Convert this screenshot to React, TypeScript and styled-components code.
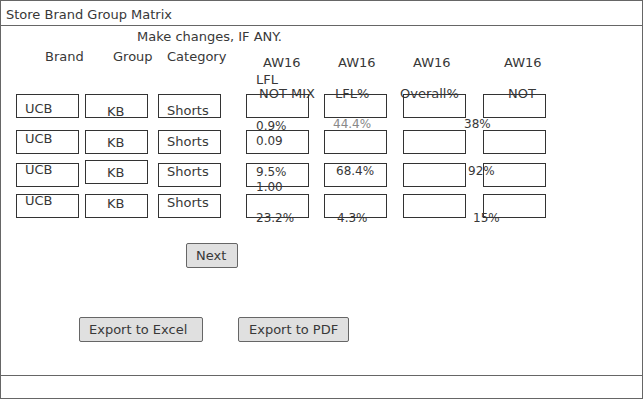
import React from "react";
import styled, { createGlobalStyle, css } from "styled-components";

const Global = createGlobalStyle`
  html, body { margin: 0; padding: 0; background: #ffffff; }
  body { font-family: "DejaVu Sans", "Liberation Sans", sans-serif; color: #333333; }
`;

const Window = styled.div`
  width: 643px;
  height: 399px;
  box-sizing: border-box;
  border: 1px solid #666666;
  display: flex;
  flex-direction: column;
  background: #ffffff;
`;

const TitleBar = styled.div`
  height: 25px;
  box-sizing: border-box;
  border-bottom: 1px solid #666666;
  padding: 5.5px 0 0 5px;
  font-size: 13px;
  line-height: 15px;
  color: #383838;
`;

const Body = styled.div`
  flex: 1;
  display: flex;
  flex-direction: column;
  padding-top: 3px;
`;

const StatusBar = styled.div`
  height: 23px;
  box-sizing: border-box;
  border-top: 1px solid #666666;
`;

const Notice = styled.div`
  margin-left: 136px;
  font-size: 13px;
  line-height: 15px;
  color: #383838;
`;

const columns = css`
  display: grid;
  grid-template-columns: 69px 73px 88px 78px 79px 80px 63px;
  padding-left: 15px;
`;

const HeaderRow = styled.div`
  ${columns};
  height: 50px;
`;

const HeaderCell = styled.div`
  display: flex;
  flex-direction: column;
  align-items: flex-start;
`;

const HeadLabel = styled.span<{ $x: number; $y: number }>`
  margin-left: ${(p) => p.$x}px;
  margin-top: ${(p) => p.$y}px;
  font-size: 13px;
  line-height: 15px;
  color: #383838;
  white-space: nowrap;
`;

const Row = styled.div<{ $gap: number }>`
  ${columns};
  margin-top: ${(p) => p.$gap}px;
  height: 24px;
`;

const Box = styled.div<{ $shift?: number }>`
  position: relative;
  width: 63px;
  height: 24px;
  box-sizing: border-box;
  border: 1px solid #333333;
  margin-top: ${(p) => p.$shift ?? 0}px;
`;

const BoxText = styled.span<{ $x: number; $y: number; $value?: boolean; $muted?: boolean }>`
  position: absolute;
  left: ${(p) => p.$x - 1}px;
  top: ${(p) => p.$y - (p.$value ? 2 : 1)}px;
  font-size: ${(p) => (p.$value ? 12 : 13)}px;
  line-height: ${(p) => (p.$value ? 14 : 15)}px;
  color: ${(p) => (p.$muted ? "#888888" : "#383838")};
  white-space: nowrap;
`;

const ButtonRow = styled.div<{ $gap: number; $left: number; $spacing?: number }>`
  display: flex;
  margin-top: ${(p) => p.$gap}px;
  padding-left: ${(p) => p.$left}px;
  gap: ${(p) => p.$spacing ?? 0}px;
`;

const Button = styled.button<{ $w: number; $pl: number }>`
  width: ${(p) => p.$w}px;
  height: 25px;
  box-sizing: border-box;
  border: 1px solid #666666;
  border-radius: 2px;
  background: #e0e0e0;
  color: #383838;
  font-family: "DejaVu Sans", "Liberation Sans", sans-serif;
  font-size: 13px;
  line-height: 15px;
  padding: 0 0 1px ${(p) => p.$pl}px;
  text-align: left;
  margin: 0;
`;

type Txt = { t: string; x: number; y: number; value?: boolean; muted?: boolean };
type Cell = { shift?: number; texts: Txt[] };

const rows: { gap: number; cells: Cell[] }[] = [
  {
    gap: 0,
    cells: [
      { texts: [{ t: "UCB", x: 9, y: 6.5 }] },
      { texts: [{ t: "KB", x: 22, y: 10 }] },
      { texts: [{ t: "Shorts", x: 9, y: 8.5 }] },
      { texts: [{ t: "0.9%", x: 10, y: 25.5, value: true }] },
      { texts: [{ t: "44.4%", x: 9, y: 24, value: true, muted: true }] },
      { texts: [{ t: "38%", x: 61, y: 24, value: true }] },
      { texts: [] },
    ],
  },
  {
    gap: 12,
    cells: [
      { texts: [{ t: "UCB", x: 9, y: 0.5 }] },
      { texts: [{ t: "KB", x: 22, y: 4.5 }] },
      { texts: [{ t: "Shorts", x: 9, y: 3.5 }] },
      { texts: [{ t: "0.09", x: 10, y: 4.5, value: true }] },
      { texts: [] },
      { texts: [] },
      { texts: [] },
    ],
  },
  {
    gap: 9,
    cells: [
      { texts: [{ t: "UCB", x: 9, y: -1.5 }] },
      { shift: -3, texts: [{ t: "KB", x: 22, y: 4.5 }] },
      { texts: [{ t: "Shorts", x: 9, y: 0.5 }] },
      {
        texts: [
          { t: "9.5%", x: 10, y: 2.5, value: true },
          { t: "1.00", x: 10, y: 17.5, value: true },
        ],
      },
      { texts: [{ t: "68.4%", x: 12, y: 1.5, value: true }] },
      { texts: [{ t: "92%", x: 65, y: 1.5, value: true }] },
      { texts: [] },
    ],
  },
  {
    gap: 7,
    cells: [
      { texts: [{ t: "UCB", x: 9, y: -1.5 }] },
      { texts: [{ t: "KB", x: 22, y: 1.5 }] },
      { texts: [{ t: "Shorts", x: 9, y: 0.5 }] },
      { texts: [{ t: "23.2%", x: 10, y: 17.5, value: true }] },
      { texts: [{ t: "4.3%", x: 13, y: 17.5, value: true }] },
      { texts: [{ t: "15%", x: 70, y: 17.5, value: true }] },
      { texts: [] },
    ],
  },
];

const headers: { t: string; x: number; y: number }[][] = [
  [{ t: "Brand", x: 29, y: 5 }],
  [{ t: "Group", x: 28, y: 5 }],
  [{ t: "Category", x: 9, y: 5 }],
  [
    { t: "AW16", x: 17, y: 11 },
    { t: "LFL", x: 10, y: 2 },
    { t: "NOT MIX", x: 13, y: -1 },
  ],
  [
    { t: "AW16", x: 14, y: 11 },
    { t: "LFL%", x: 11, y: 16 },
  ],
  [
    { t: "AW16", x: 10, y: 11 },
    { t: "Overall%", x: -3, y: 16 },
  ],
  [
    { t: "AW16", x: 21, y: 11 },
    { t: "NOT", x: 25, y: 16 },
  ],
];

export default function App() {
  return (
    <>
      <Global />
      <Window>
        <TitleBar>Store Brand Group Matrix</TitleBar>
        <Body>
          <Notice>Make changes, IF ANY.</Notice>
          <HeaderRow>
            {headers.map((col, i) => (
              <HeaderCell key={i}>
                {col.map((h, j) => (
                  <HeadLabel key={j} $x={h.x} $y={h.y}>
                    {h.t}
                  </HeadLabel>
                ))}
              </HeaderCell>
            ))}
          </HeaderRow>
          {rows.map((r, i) => (
            <Row key={i} $gap={r.gap}>
              {r.cells.map((c, j) => (
                <Box key={j} $shift={c.shift}>
                  {c.texts.map((t, k) => (
                    <BoxText key={k} $x={t.x} $y={t.y} $value={t.value} $muted={t.muted}>
                      {t.t}
                    </BoxText>
                  ))}
                </Box>
              ))}
            </Row>
          ))}
          <ButtonRow $gap={25} $left={185}>
            <Button $w={52} $pl={9}>Next</Button>
          </ButtonRow>
          <ButtonRow $gap={49} $left={78} $spacing={35}>
            <Button $w={124} $pl={9}>Export to Excel</Button>
            <Button $w={111} $pl={10}>Export to PDF</Button>
          </ButtonRow>
        </Body>
        <StatusBar />
      </Window>
    </>
  );
}
